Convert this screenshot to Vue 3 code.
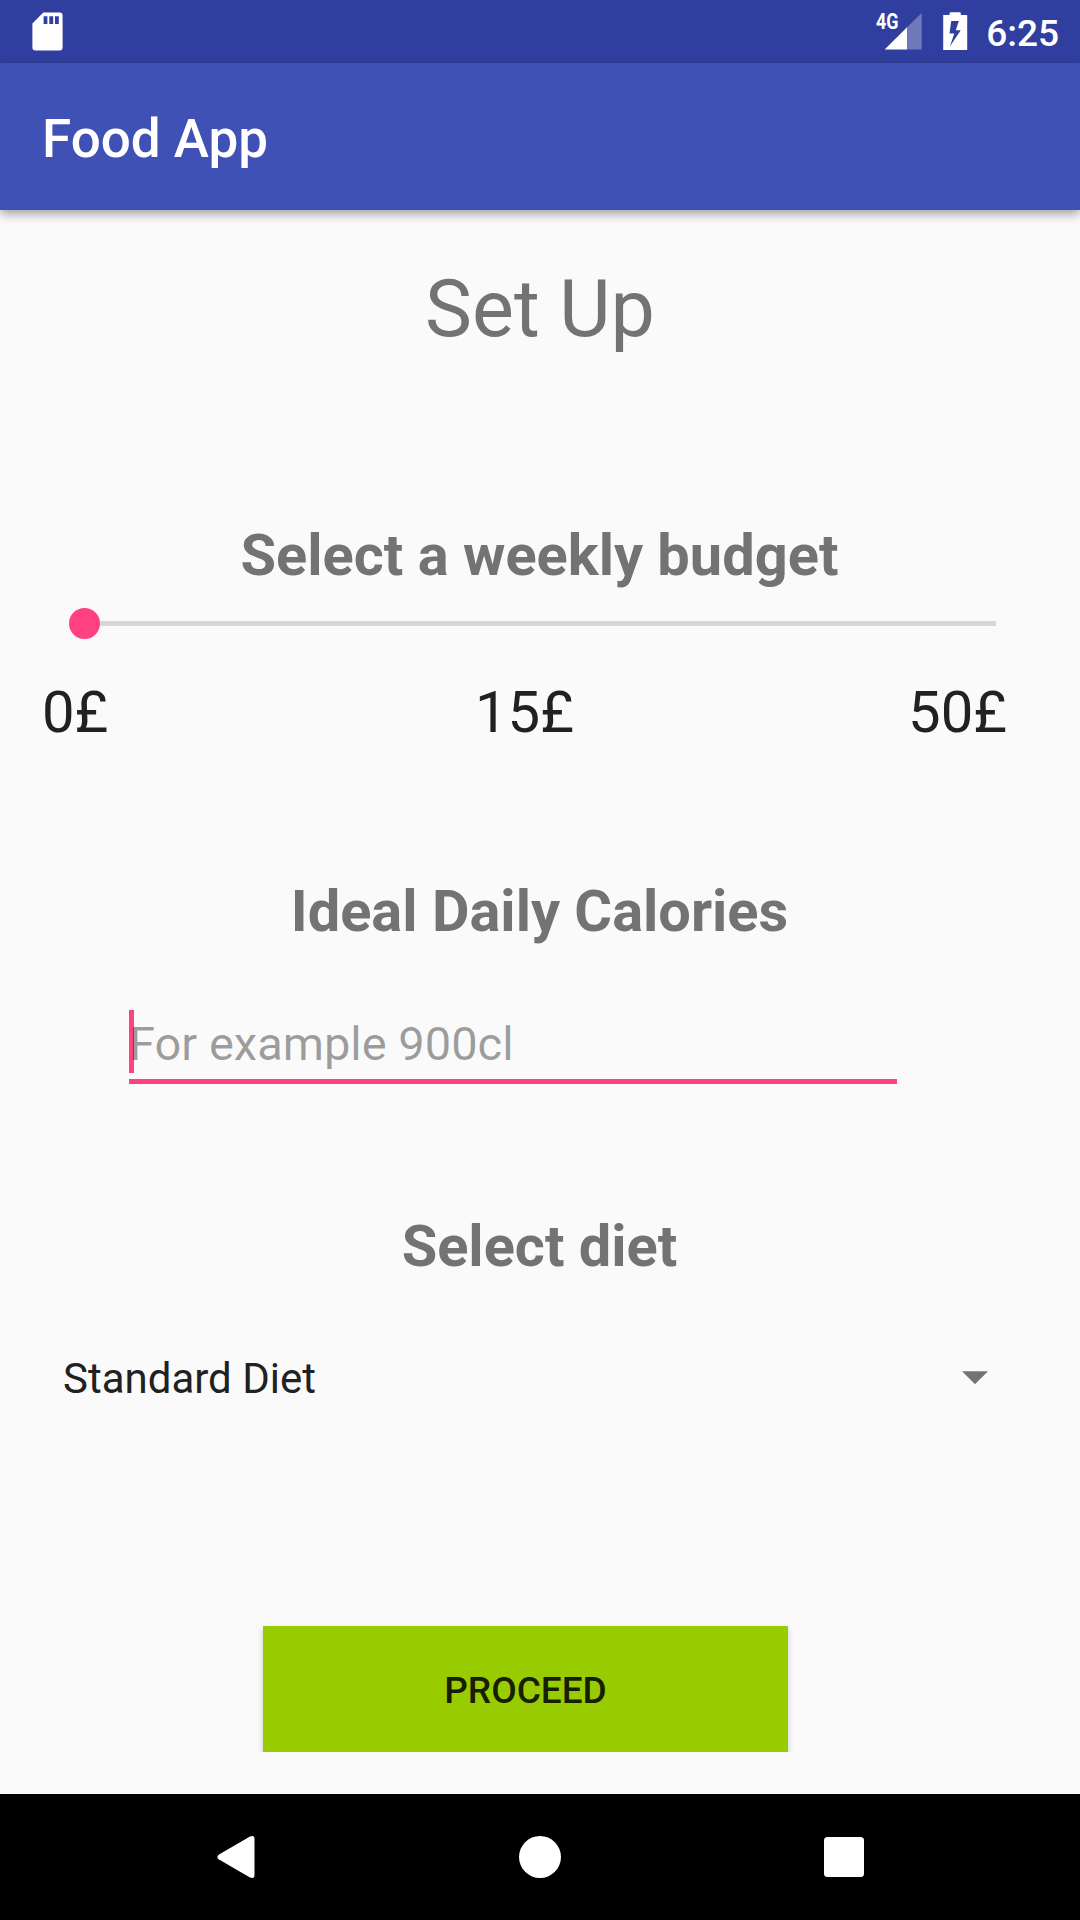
<script setup>
import { ref } from 'vue'

const amounts = ['0£', '15£', '50£']
const calories = ref('')
const diet = ref('Standard Diet')
</script>

<template>
  <div class="screen">
    <header class="status">
      <svg class="sd" width="31" height="39" viewBox="0 0 31 39">
        <path fill="#fff" fill-rule="evenodd" d="M11.3.4H27.6a3 3 0 0 1 3 3V35.400a3 3 0 0 1-3 3H3.400a3 3 0 0 1-3-3V11.500ZM11.600 4.300V12H15.400V4.300ZM17.300 4.300V12H21.200V4.300ZM23 4.300V12H26.800V4.300Z" />
      </svg>
      <div class="status-right">
        <svg class="signal" width="52" height="50" viewBox="-4 -10 52 50">
          <path fill="#fff" fill-opacity=".3" d="M31 15.300 45.700 1V37.600H31Z" />
          <path fill="#fff" d="M8.700 37.600 31 15.300V37.600Z" />
          <text x="0" y="17" textLength="22.500" lengthAdjust="spacingAndGlyphs">4G</text>
        </svg>
        <svg class="battery" width="25" height="39" viewBox="0 0 25 39">
          <path fill="#fff" fill-rule="evenodd" d="M6.600 3V1.200Q6.600.300 7.600.300H16.800Q17.800.300 17.800 1.200V3H24.200V38H.200V3ZM8.200 9 6.500 21.600H11.300L6.900 34.600 17.700 18.200H12.800L15.800 9Z" />
        </svg>
        <span class="clock">6:25</span>
      </div>
    </header>

    <div class="appbar"><h1>Food App</h1></div>

    <main class="content">
      <h2 class="title">Set Up</h2>

      <h3 class="budget-heading">Select a weekly budget</h3>
      <div class="slider">
        <div class="thumb"></div>
        <div class="track"></div>
      </div>
      <div class="amounts">
        <span v-for="a in amounts" :key="a">{{ a }}</span>
      </div>

      <h3 class="calories-heading">Ideal Daily Calories</h3>
      <div class="field">
        <span class="caret"></span>
        <input v-model="calories" type="text" placeholder="For example 900cl" />
      </div>

      <h3 class="diet-heading">Select diet</h3>
      <div class="spinner">
        <span>{{ diet }}</span>
        <svg width="26" height="13" viewBox="0 0 26 13"><path fill="#737373" d="M0 .300H26L13 13.200Z" /></svg>
      </div>

      <div class="actions">
        <button type="button">PROCEED</button>
      </div>
    </main>

    <nav class="navbar">
      <svg width="38" height="44" viewBox="0 0 38 44">
        <path fill="#fff" d="M1.600 19.700 33 1.600Q37.500-.100 37.500 4V40Q37.500 44.100 33 42.400L1.600 24.300Q-.800 22 1.600 19.700Z" />
      </svg>
      <svg width="42" height="42" viewBox="0 0 42 42"><circle cx="21" cy="21" r="21" fill="#fff" /></svg>
      <svg width="40" height="40" viewBox="0 0 40 40"><rect width="40" height="40" rx="3.500" fill="#fff" /></svg>
    </nav>
  </div>
</template>

<style>
body {
  margin: 0;
  background: #fafafa;
}
</style>

<style scoped>
.screen {
  width: 1080px;
  height: 1920px;
  display: flex;
  flex-direction: column;
  overflow: hidden;
  background: #fafafa;
  color: #212121;
  font-family: Roboto, "Liberation Sans", sans-serif;
}
svg {
  display: block;
  flex: none;
}
h1, h2, h3 {
  margin: 0;
}
.status {
  height: 63px;
  box-sizing: border-box;
  padding: 0 21px 0 32px;
  display: flex;
  justify-content: space-between;
  align-items: flex-start;
  background: #303f9f;
  color: #fff;
}
.sd {
  margin-top: 12px;
}
.status-right {
  display: flex;
  align-items: flex-start;
}
.signal {
  margin: 2px 19px 0 0;
}
.signal text {
  fill: #fff;
  font-size: 21.5px;
  font-weight: 700;
}
.battery {
  margin: 12px 18.5px 0 0;
}
.clock {
  height: 63px;
  line-height: 67px;
  font-size: 37px;
  font-weight: 500;
}
.appbar {
  height: 147px;
  box-sizing: border-box;
  padding: 5px 42px 0;
  display: flex;
  align-items: center;
  background: #3f51b5;
  color: #fff;
  box-shadow: 0 4px 10px rgba(0, 0, 0, 0.36);
}
.appbar h1 {
  font-size: 53px;
  line-height: 62px;
  font-weight: 500;
}
.content {
  height: 1584px;
  display: flex;
  flex-direction: column;
}
.title {
  margin-top: 53px;
  font-size: 79px;
  line-height: 92px;
  font-weight: 400;
  text-align: center;
  color: #737373;
}
h3 {
  padding-right: 1px;
  font-size: 57.75px;
  line-height: 68px;
  font-weight: 700;
  text-align: center;
  color: #737373;
}
.budget-heading {
  margin-top: 166px;
}
.slider {
  height: 31px;
  margin: 19px 84px 0 69px;
  display: flex;
  align-items: center;
}
.thumb {
  width: 31px;
  height: 31px;
  border-radius: 50%;
  background: #ff4081;
}
.track {
  flex: 1;
  height: 5px;
  background: #d7d7d7;
}
.amounts {
  margin: 39px 73px 0 42px;
  display: grid;
  grid-template-columns: repeat(3, 1fr);
  font-size: 58px;
  line-height: 68px;
}
.amounts span:nth-child(2) {
  text-align: center;
}
.amounts span:nth-child(3) {
  text-align: right;
}
.calories-heading {
  margin-top: 131px;
}
.field {
  position: relative;
  width: 768px;
  height: 69px;
  margin: 65px 0 0 129px;
  border-bottom: 5px solid #ff4081;
}
.caret {
  position: absolute;
  left: 0;
  top: 0;
  width: 5px;
  height: 63px;
  background: #ff4081;
}
.field input {
  position: relative;
  display: block;
  width: 100%;
  height: 68px;
  box-sizing: border-box;
  padding: 0;
  border: 0;
  outline: 0;
  background: transparent;
  font-family: inherit;
  font-size: 47px;
  line-height: 68px;
  color: #212121;
}
.field input::placeholder {
  color: rgba(0, 0, 0, 0.38);
  opacity: 1;
}
.diet-heading {
  margin-top: 128px;
}
.spinner {
  height: 50px;
  margin: 74px 92px 0 63px;
  display: flex;
  align-items: center;
  justify-content: space-between;
  font-size: 42px;
  line-height: 50px;
}
.spinner svg {
  margin-bottom: 3px;
}
.actions {
  height: 126px;
  margin-top: 202px;
  padding: 20px 0 0 263px;
  overflow: hidden;
}
button {
  display: block;
  width: 525px;
  height: 126px;
  padding: 3px 0 0;
  border: 0;
  background: #99cc00;
  box-shadow: 0 3px 6px rgba(0, 0, 0, 0.2);
  color: rgba(0, 0, 0, 0.87);
  font-family: inherit;
  font-size: 37px;
  line-height: 44px;
  font-weight: 500;
}
.navbar {
  height: 126px;
  box-sizing: border-box;
  padding: 0 216px 0 217px;
  display: flex;
  align-items: center;
  justify-content: space-between;
  background: #000;
}
</style>
